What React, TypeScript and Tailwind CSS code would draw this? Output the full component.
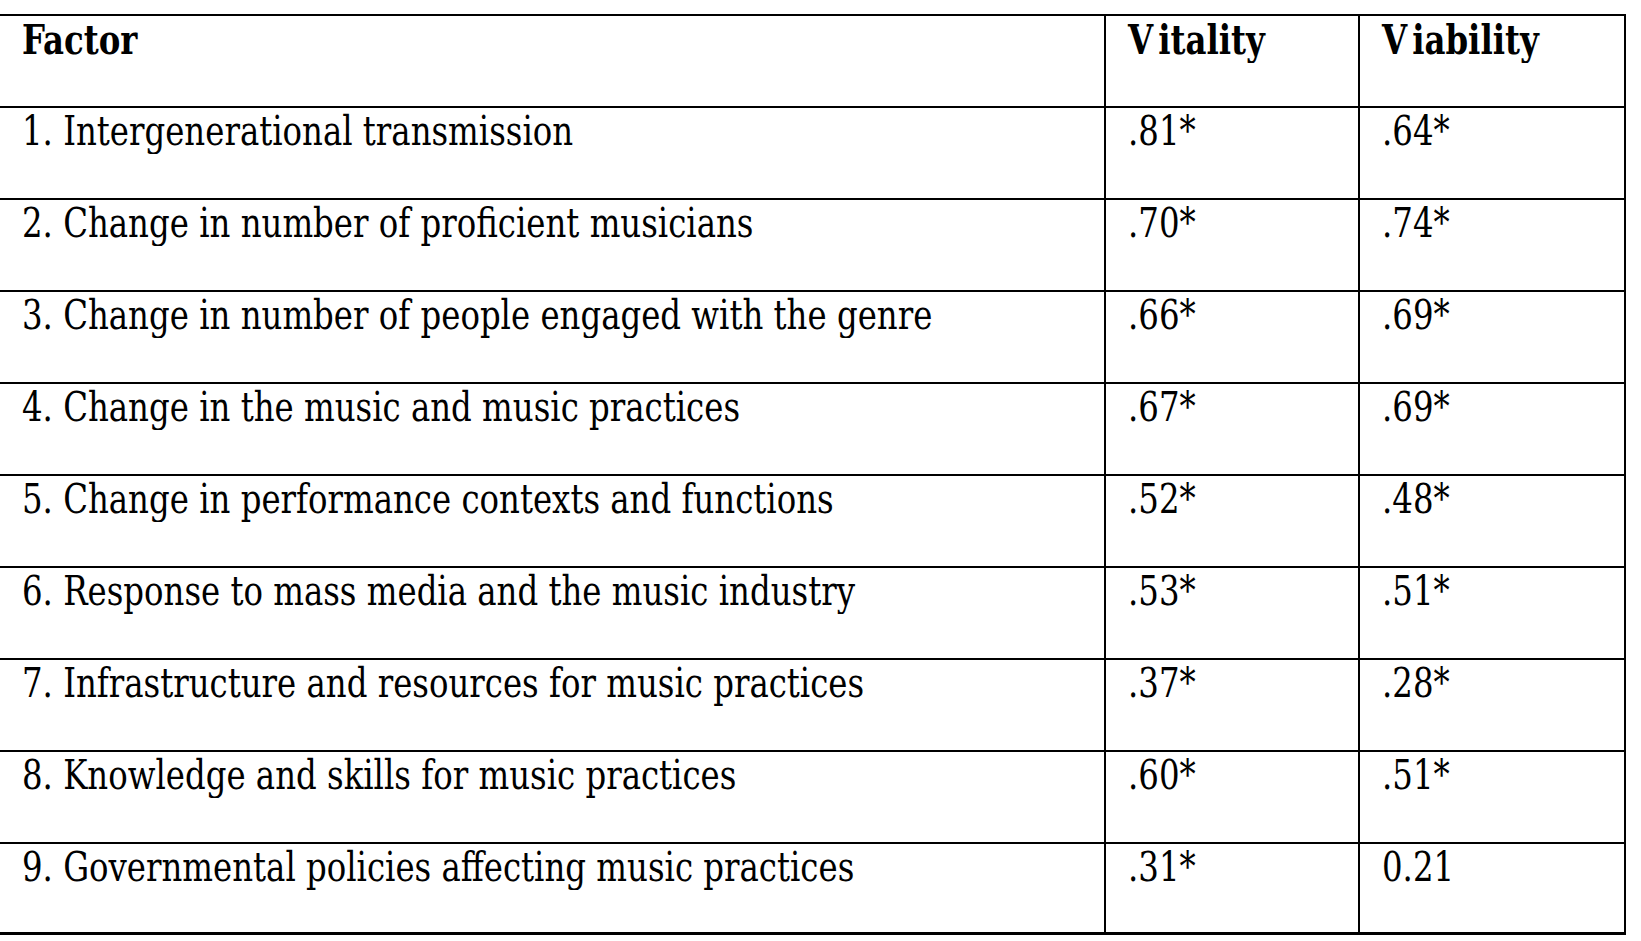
const rows: [string, string, string][] = [
  ['1. Intergenerational transmission', '.81*', '.64*'],
  ['2. Change in number of proficient musicians', '.70*', '.74*'],
  ['3. Change in number of people engaged with the genre', '.66*', '.69*'],
  ['4. Change in the music and music practices', '.67*', '.69*'],
  ['5. Change in performance contexts and functions', '.52*', '.48*'],
  ['6. Response to mass media and the music industry', '.53*', '.51*'],
  ['7. Infrastructure and resources for music practices', '.37*', '.28*'],
  ['8. Knowledge and skills for music practices', '.60*', '.51*'],
  ['9. Governmental policies affecting music practices', '.31*', '0.21'],
];

function Cell({ children, bold, last }: { children: React.ReactNode; bold?: boolean; last?: boolean }) {
  return (
    <div className={`h-full pl-[22px] pt-[1px] ${last ? '' : 'border-r-2 border-black'}`}>
      <span
        className={`inline-block origin-top scale-y-[1.12] whitespace-nowrap text-[36px] leading-[40px] ${bold ? 'font-bold' : ''}`}
      >
        {children}
      </span>
    </div>
  );
}

// the source has a loose gap after the capital V in the headers
function Spaced({ word }: { word: string }) {
  return (
    <>
      <span className="mr-[5px]">{word[0]}</span>
      {word.slice(1)}
    </>
  );
}

export default function App() {
  return (
    <div className="h-[941px] w-[1641px] bg-white pt-[14px] text-black [font-family:'DejaVu_Serif_Condensed','DejaVu_Serif',serif] [font-stretch:condensed]">
      <div className="w-[1626px] border-t-2 border-r-2 border-black">
        <div className="grid h-[92px] grid-cols-[1106px_254px_1fr] border-b-2 border-black">
          <Cell bold>Factor</Cell>
          <Cell bold>
            <Spaced word="Vitality" />
          </Cell>
          <Cell bold last>
            <Spaced word="Viability" />
          </Cell>
        </div>
        {rows.map(([factor, vitality, viability], i) => (
          <div
            key={factor}
            className={`grid grid-cols-[1106px_254px_1fr] border-black ${i === rows.length - 1 ? 'h-[91px] border-b-[3px]' : 'h-[92px] border-b-2'}`}
          >
            <Cell>{factor}</Cell>
            <Cell>{vitality}</Cell>
            <Cell last>{viability}</Cell>
          </div>
        ))}
      </div>
    </div>
  );
}
